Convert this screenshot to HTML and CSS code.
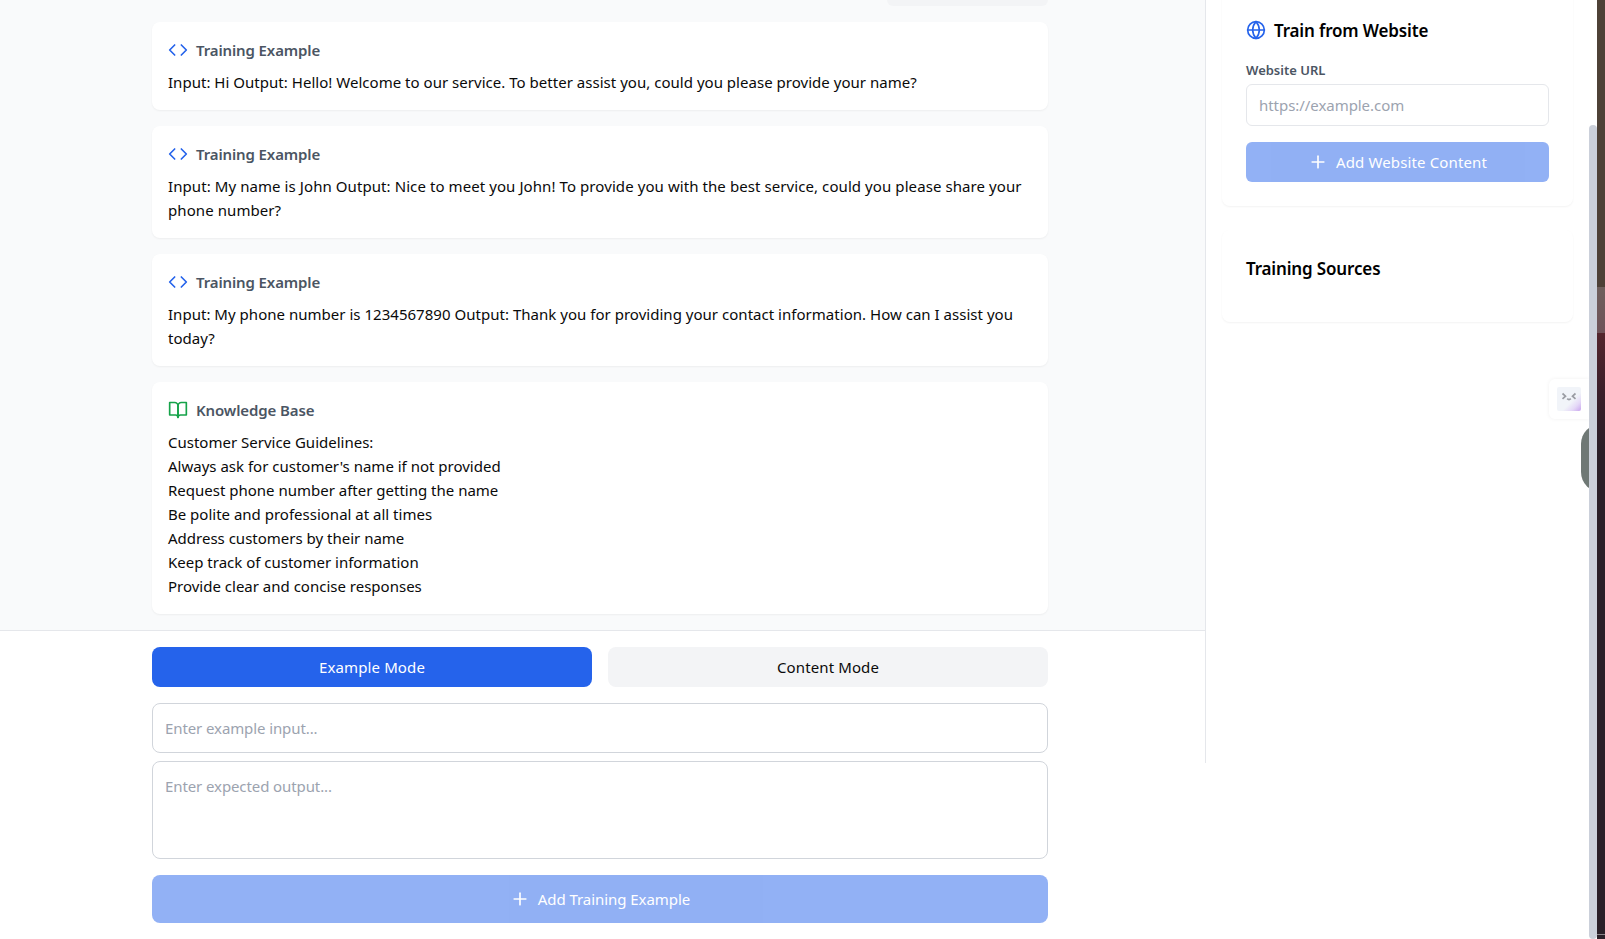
FILE: index.html
```html
<!DOCTYPE html>
<html lang="en">

<head>
    <meta charset="UTF-8">
    <meta name="viewport" content="width=device-width, initial-scale=1.0">
    <title>Training</title>
    <link rel="stylesheet" href="styles.css">
</head>
<body>
    <div class="app">
        <main class="main">
            <div class="messages">
                <div class="bubble"></div>

                <div class="card">
                    <div class="card-head">
                        <svg class="icon blue" viewBox="0 0 24 24"><polyline points="16 18 22 12 16 6"/><polyline points="8 6 2 12 8 18"/></svg>
                        <span>Training Example</span>
                    </div>
                    <p class="loose">Input: Hi Output: Hello! Welcome to our service. To better assist you, could you please provide your name?</p>
                </div>

                <div class="card">
                    <div class="card-head">
                        <svg class="icon blue" viewBox="0 0 24 24"><polyline points="16 18 22 12 16 6"/><polyline points="8 6 2 12 8 18"/></svg>
                        <span>Training Example</span>
                    </div>
                    <p class="looser">Input: My name is John Output: Nice to meet you John! To provide you with the best service, could you please share your<br>phone number?</p>
                </div>

                <div class="card">
                    <div class="card-head">
                        <svg class="icon blue" viewBox="0 0 24 24"><polyline points="16 18 22 12 16 6"/><polyline points="8 6 2 12 8 18"/></svg>
                        <span>Training Example</span>
                    </div>
                    <p class="loose">Input: My phone number is 1234567890 Output: Thank you for providing your contact information. How can I assist you<br>today?</p>
                </div>

                <div class="card">
                    <div class="card-head">
                        <svg class="icon green" viewBox="0 0 24 24"><path d="M2 3h6a4 4 0 0 1 4 4v14a3 3 0 0 0-3-3H2z"/><path d="M22 3h-6a4 4 0 0 0-4 4v14a3 3 0 0 1 3-3h7z"/></svg>
                        <span>Knowledge Base</span>
                    </div>
                    <p>Customer Service Guidelines:<br>
                    Always ask for customer's name if not provided<br>
                    Request phone number after getting the name<br>
                    Be polite and professional at all times<br>
                    Address customers by their name<br>
                    Keep track of customer information<br>
                    Provide clear and concise responses</p>
                </div>
            </div>

            <form class="composer">
                <div class="modes">
                    <button type="button" class="mode active">Example Mode</button>
                    <button type="button" class="mode">Content Mode</button>
                </div>
                <input type="text" class="field" placeholder="Enter example input...">
                <textarea class="field area" placeholder="Enter expected output..."></textarea>
                <button type="button" class="add add-example" disabled>
                    <svg class="icon" viewBox="0 0 24 24"><path d="M5 12h14"/><path d="M12 5v14"/></svg>
                    <span>Add Training Example</span>
                </button>
            </form>
        </main>

        <aside class="sidebar">
            <section class="panel panel-website">
                <h2>
                    <svg class="icon blue" viewBox="0 0 24 24"><circle cx="12" cy="12" r="10"/><path d="M2 12h20"/><path d="M12 2a15.3 15.3 0 0 1 4 10 15.3 15.3 0 0 1-4 10 15.3 15.3 0 0 1-4-10 15.3 15.3 0 0 1 4-10z"/></svg>
                    <span>Train from Website</span>
                </h2>
                <label for="website_url">Website URL</label>
                <input type="text" id="website_url" class="url" placeholder="https://example.com">
                <button type="button" class="add add-website" disabled>
                    <svg class="icon" viewBox="0 0 24 24"><path d="M5 12h14"/><path d="M12 5v14"/></svg>
                    <span>Add Website Content</span>
                </button>
            </section>
            <section class="panel">
                <h2><span>Training Sources</span></h2>
            </section>
        </aside>

        <!-- floating helpers on the right edge -->
        <div class="helper">
            <svg class="face" viewBox="0 0 24 24">
                <defs>
                    <linearGradient id="face-bg" x1="0" y1="0" x2="1" y2="1">
                        <stop offset="0.6" stop-color="#f1f4f9"/>
                        <stop offset="0.8" stop-color="#e4d8f7"/>
                        <stop offset="1" stop-color="#c9a4ee"/>
                    </linearGradient>
                </defs>
                <rect width="24" height="24" rx="2" fill="url(#face-bg)"/>
                <path d="M5.500 6.500l3 2.700-3 2.700M18.500 6.500l-3 2.700 3 2.700M10.200 11.700q1.800 1.800 3.600 0" fill="none" stroke="#9a9ca3" stroke-width="1.700"/>
            </svg>
        </div>
        <div class="pill"></div>
    </div>
    <div class="scrollbar"><div class="thumb"></div></div>
    <div class="desktop"><div class="desktop-light"></div><div class="desktop-dark"></div></div>
</body>

</html>
```

FILE: styles.css
```css
* {
    box-sizing: border-box;
}

body {
    margin: 0;
    display: flex;
    height: 939px;
    overflow: hidden;
    background: #fff;
    color: #0a0a0a;
    font-family: "Segoe UI", "Noto Sans", sans-serif;
    font-size: 15px;
    line-height: 24px;
}

p, h2 {
    margin: 0;
}

button, input, textarea {
    font: inherit;
    color: inherit;
    letter-spacing: inherit;
}

.icon {
    width: 20px;
    height: 20px;
    flex: none;
    fill: none;
    stroke: currentColor;
    stroke-width: 2;
    stroke-linecap: round;
    stroke-linejoin: round;
}

.blue {
    color: #2563eb;
}

.green {
    color: #16a34a;
}

.app {
    position: relative;
    display: flex;
    align-items: flex-start;
    width: 1589px;
    height: 939px;
    overflow: hidden;
}

/* chat column */
.main {
    width: 1205px;
}

.messages {
    display: flex;
    flex-direction: column;
    gap: 16px;
    height: 630px;
    padding: 0 157px 16px 152px;
    background: #f9fafb;
}

.bubble {
    align-self: flex-end;
    width: 161px;
    height: 6px;
    border-radius: 0 0 8px 8px;
    background: #f3f4f6;
}

.card {
    padding: 16px;
    border-radius: 8px;
    background: #fff;
    box-shadow: 0 1px 2px rgba(0, 0, 0, 0.05);
    white-space: nowrap;
}

.card-head {
    display: flex;
    align-items: center;
    gap: 8px;
    margin-bottom: 8px;
    color: #4b5563;
    font-weight: 600;
    letter-spacing: -0.12px;
}

.loose {
    letter-spacing: 0.025px;
}

.looser {
    letter-spacing: 0.08px;
}

.composer {
    display: flex;
    flex-direction: column;
    height: 309px;
    padding: 16px 157px 16px 152px;
    border-top: 1px solid #e5e7eb;
}

.modes {
    display: flex;
    gap: 16px;
    margin-bottom: 16px;
}

.mode {
    flex: 1;
    height: 40px;
    border: 0;
    border-radius: 8px;
    background: #f3f4f6;
    letter-spacing: 0.12px;
}

.mode.active {
    background: #2563eb;
    color: #fff;
}

.field {
    height: 50px;
    margin-bottom: 8px;
    padding: 12px;
    border: 1px solid #d1d5db;
    border-radius: 8px;
    background: #fff;
    letter-spacing: -0.1px;
}

.area {
    height: 98px;
    margin-bottom: 16px;
    resize: none;
}

::placeholder {
    color: #9ca3af;
    opacity: 1;
}

.add {
    display: flex;
    align-items: center;
    justify-content: center;
    gap: 8px;
    width: 100%;
    border: 0;
    background: #2563eb;
    color: #fff;
    opacity: 0.5;
}

.add-example {
    height: 48px;
    border-radius: 8px;
    letter-spacing: -0.05px;
}

/* sidebar */
.sidebar {
    display: flex;
    flex-direction: column;
    gap: 24px;
    width: 384px;
    height: 763px;
    padding: 0 16px;
    border-left: 1px solid #e5e7eb;
}

.panel {
    padding: 24px;
    border-radius: 8px;
    background: #fff;
    box-shadow: 0 1px 2px rgba(0, 0, 0, 0.05);
}

.panel-website {
    margin-top: -8px;
}

.panel h2 {
    display: flex;
    align-items: center;
    gap: 8px;
    height: 28px;
    margin-bottom: 16px;
    color: #000;
    font-size: 17px;
    font-weight: 600;
    line-height: 28px;
    letter-spacing: -0.15px;
}

.panel h2 span {
    padding-top: 2px;
}

.panel label {
    display: block;
    margin-bottom: 4px;
    color: #4b5563;
    font-size: 13px;
    font-weight: 600;
    line-height: 20px;
}

.url {
    display: block;
    width: 100%;
    height: 42px;
    margin-bottom: 16px;
    padding: 8px 12px;
    border: 1px solid #e5e7eb;
    border-radius: 6px;
    letter-spacing: -0.05px;
}

.add-website {
    height: 40px;
    border-radius: 6px;
    letter-spacing: 0.14px;
}

.helper {
    position: absolute;
    top: 379px;
    right: 0;
    width: 40px;
    height: 40px;
    padding: 8px;
    border-radius: 6px 0 0 6px;
    background: #fff;
    box-shadow: 0 0 4px rgba(0, 0, 0, 0.06);
}

.face {
    display: block;
    width: 24px;
    height: 24px;
}

.pill {
    position: absolute;
    top: 424px;
    right: -32px;
    width: 40px;
    height: 68px;
    border-radius: 20px;
    background: #6f7875;
}

/* window edge */
.scrollbar {
    width: 8px;
    padding-top: 125px;
    background: #fff;
}

.thumb {
    height: 814px;
    border-radius: 4px;
    background: #cbd0da;
}

.desktop {
    width: 8px;
    padding-top: 287px;
    background: #4e4137;
}

.desktop-light {
    height: 46px;
    background: linear-gradient(#6f5f5c, #6f5359);
}

.desktop-dark {
    height: 606px;
    background: linear-gradient(transparent 601px, #8a8488 601px, #8a8488 602px, transparent 602px), linear-gradient(#54262d, #3a1f2a 60px, #2a1f28 120px);
}
```
